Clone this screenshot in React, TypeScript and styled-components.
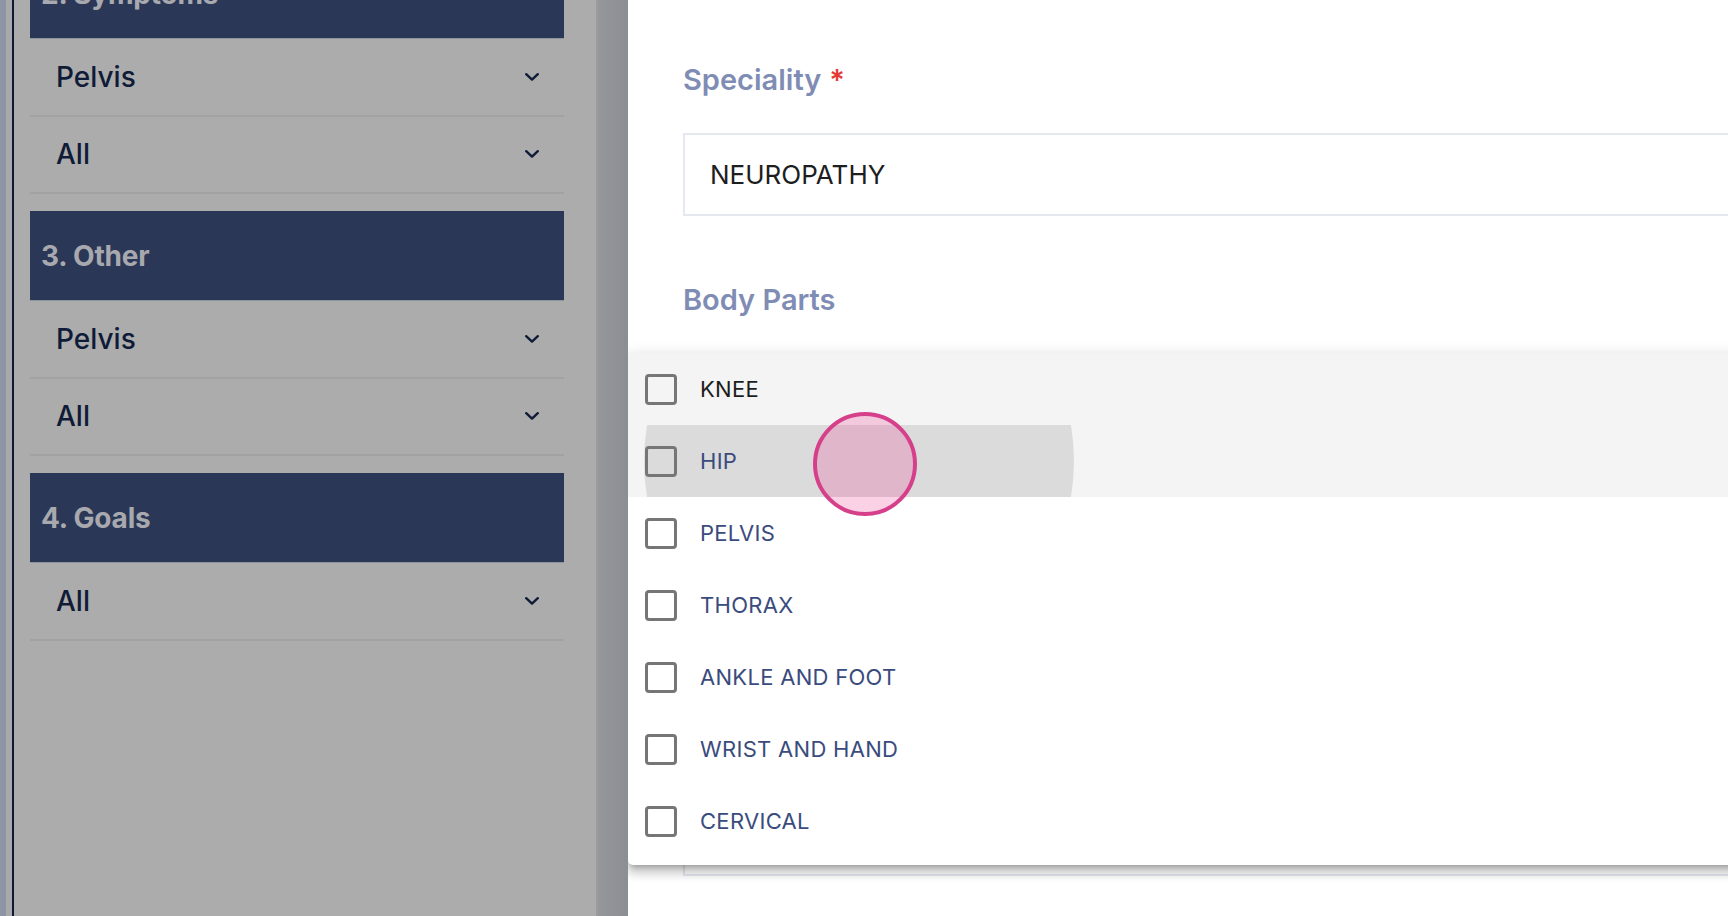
import { FC } from 'react';
import styled, { createGlobalStyle } from 'styled-components';

const GlobalStyle = createGlobalStyle`
  html, body {
    margin: 0;
    padding: 0;
    height: 100%;
    overflow: hidden;
  }
  body {
    font-family: 'Inter', 'Noto Sans', sans-serif;
  }
  * {
    box-sizing: border-box;
  }
`;

interface Group {
  title: string;
  rows: string[];
}

const groups: Group[] = [
  { title: '2. Symptoms', rows: ['Pelvis', 'All'] },
  { title: '3. Other', rows: ['Pelvis', 'All'] },
  { title: '4. Goals', rows: ['All'] },
];

const bodyParts = [
  'KNEE',
  'HIP',
  'PELVIS',
  'THORAX',
  'ANKLE AND FOOT',
  'WRIST AND HAND',
  'CERVICAL',
];

const Page = styled.div`
  position: relative;
  display: flex;
  width: 100vw;
  height: 100vh;
  overflow: hidden;
`;

const Backdrop = styled.div`
  display: flex;
  flex-shrink: 0;
  width: 628px;
  height: 100%;
`;

const EdgeStrip = styled.div<{ w: number; color: string }>`
  flex-shrink: 0;
  width: ${(p) => p.w}px;
  background: ${(p) => p.color};
`;

const Shade = styled.div`
  flex-shrink: 0;
  width: 30px;
  background: linear-gradient(to right, #95979b, #8b8e93);
`;

const Sidebar = styled.div`
  flex-shrink: 0;
  width: 582px;
  background: #acacac;
  padding: 0 32px 0 16px;
  display: flex;
  flex-direction: column;
`;

// the list is scrolled, so the first header sits partly above the fold
const SectionHeader = styled.div<{ first?: boolean }>`
  height: 90px;
  margin-top: ${(p) => (p.first ? '-51px' : '17px')};
  background: #2b3757;
  border-bottom: 1px solid #8e949e;
  display: flex;
  align-items: center;
  padding-left: 11px;
  color: #a7a9ae;
  font-size: 28px;
  font-weight: 700;
  letter-spacing: -0.2px;
`;

const SelectRow = styled.div`
  height: 77.5px;
  display: flex;
  align-items: center;
  justify-content: space-between;
  padding: 0 25px 0 26px;
  border-bottom: 2px solid #a2a2a2;
  color: #0f1b37;
  font-size: 28px;
  font-weight: 500;
`;

const Chevron: FC = () => (
  <svg width="14" height="8" viewBox="0 0 14 8" fill="none">
    <path
      d="M1.2 1.2 L7 6.6 L12.8 1.2"
      stroke="#0f1b37"
      strokeWidth="2.4"
      strokeLinecap="round"
      strokeLinejoin="round"
    />
  </svg>
);

const Drawer = styled.div`
  position: relative;
  flex: 1;
  min-width: 0;
  height: 100%;
  background: #ffffff;
  padding: 60px 0 0 55px;
  overflow: hidden;
`;

const FieldLabel = styled.div<{ gap: number }>`
  margin-top: ${(p) => p.gap}px;
  line-height: 40px;
  height: 40px;
  color: #7f8db4;
  font-size: 29px;
  font-weight: 600;
`;

const Required = styled.span`
  color: #e53935;
  margin-left: 8px;
`;

const Field = styled.div<{ h: number }>`
  margin-top: 33px;
  width: calc(100% + 20px);
  height: ${(p) => p.h}px;
  border: 2px solid #e5e9ef;
  display: flex;
  align-items: center;
  padding-left: 25px;
  color: #1e1e1e;
  font-size: 26px;
`;

const Menu = styled.div`
  position: absolute;
  left: 0;
  top: 353px;
  right: -20px;
  background: #ffffff;
  border-radius: 5px;
  padding: 0 0 8px;
  box-shadow: 0 5px 5px -3px rgba(0, 0, 0, 0.2),
    0 8px 10px 1px rgba(0, 0, 0, 0.14), 0 3px 14px 2px rgba(0, 0, 0, 0.12);
`;

const Option = styled.div<{ active?: boolean; selected?: boolean }>`
  position: relative;
  overflow: hidden;
  height: 72px;
  display: flex;
  align-items: center;
  gap: 23px;
  padding-left: 17px;
  background: ${(p) => (p.active ? '#f4f4f4' : 'transparent')};
  color: ${(p) => (p.selected ? '#1d1d1d' : '#3a4b7d')};
  font-size: 22px;
  letter-spacing: 0.3px;
`;

const Box = styled.span`
  position: relative;
  z-index: 1;
  flex-shrink: 0;
  width: 32px;
  height: 31px;
  border: 3px solid #767676;
  border-radius: 4px;
`;

const OptionText = styled.span`
  position: relative;
  z-index: 1;
`;

const Ripple = styled.span`
  position: absolute;
  left: 16px;
  top: -179px;
  width: 430px;
  height: 430px;
  border-radius: 50%;
  background: rgba(0, 0, 0, 0.1);
`;

const ClickMark = styled.div`
  position: absolute;
  left: 813px;
  top: 412px;
  width: 104px;
  height: 104px;
  border-radius: 50%;
  border: 4px solid #d6408a;
  background: rgba(236, 72, 153, 0.25);
  pointer-events: none;
`;

const App: FC = () => (
  <>
    <GlobalStyle />
    <Page>
      <Backdrop>
        <EdgeStrip w={6} color="#8d94a3" />
        <EdgeStrip w={6} color="#a7a9ac" />
        <EdgeStrip w={2} color="#0d1933" />
        <Sidebar>
          {groups.map((g, gi) => (
            <div key={g.title}>
              <SectionHeader first={gi === 0}>{g.title}</SectionHeader>
              {g.rows.map((r, ri) => (
                <SelectRow key={ri}>
                  {r}
                  <Chevron />
                </SelectRow>
              ))}
            </div>
          ))}
        </Sidebar>
        <EdgeStrip w={2} color="#9b9b9b" />
        <Shade />
      </Backdrop>

      <Drawer>
        <FieldLabel gap={0}>
          Speciality<Required>*</Required>
        </FieldLabel>
        <Field h={83}>NEUROPATHY</Field>
        <FieldLabel gap={64}>Body Parts</FieldLabel>
        <Field h={523} />

        <Menu>
          {bodyParts.map((part, i) => (
            <Option key={part} active={i < 2} selected={i === 0}>
              {i === 1 && <Ripple />}
              <Box />
              <OptionText>{part}</OptionText>
            </Option>
          ))}
        </Menu>
      </Drawer>

      <ClickMark />
    </Page>
  </>
);

export default App;
